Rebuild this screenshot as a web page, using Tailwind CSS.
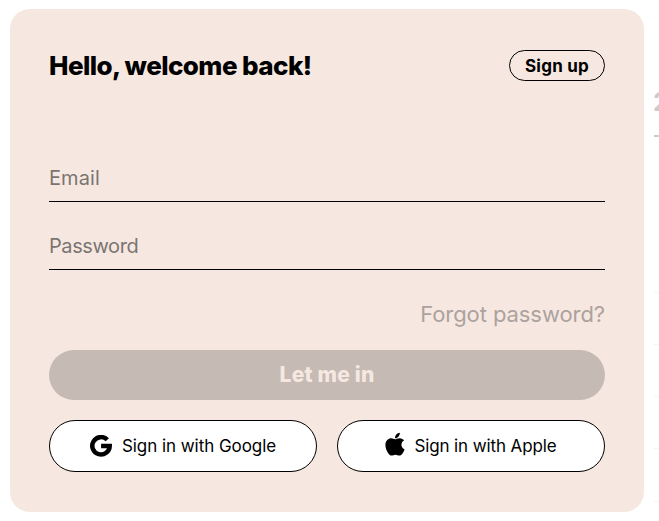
<!DOCTYPE html>
<html lang="en">
<head>
<meta charset="utf-8">
<title>Log in</title>
<script src="https://cdn.jsdelivr.net/npm/@tailwindcss/browser@4"></script>
</head>
<body class="flex h-[521px] w-[659px] gap-[10px] overflow-hidden bg-white pt-[9px] pl-[10px] font-['Inter','Liberation_Sans',sans-serif] text-black">
<main class="flex h-[503px] w-[634px] shrink-0 flex-col rounded-[20px] bg-[#f6e8e1] px-[39px] pt-[41px]">
  <header class="flex h-[31px] items-center justify-between">
    <h1 class="text-[26px] leading-[31px] font-extrabold tracking-[-0.58px] whitespace-nowrap">Hello, welcome back!</h1>
    <button class="flex h-[31px] w-24 items-center justify-center rounded-full border border-black text-[17px] leading-5 font-bold tracking-[0.25px] whitespace-nowrap">Sign up</button>
  </header>
  <form class="flex flex-col">
    <input type="email" placeholder="Email" class="mt-[73px] h-[48px] border-b border-black pt-px text-[20px] tracking-[0.1px] outline-none placeholder:text-[#7b7571]">
    <input type="password" placeholder="Password" class="mt-5 h-12 border-b border-black pt-px text-[20px] tracking-[-0.4px] outline-none placeholder:text-[#7b7571]">
    <a class="mt-[29px] self-end text-[22px] leading-[30px] tracking-[-0.07px] whitespace-nowrap text-[#aca29e]">Forgot password?</a>
    <button class="mt-[21px] h-[50px] rounded-full bg-[#c5bab4] text-[21px] font-extrabold tracking-[0.2px] text-[#f6e8e1]">Let me in</button>
    <div class="mt-5 grid grid-cols-2 gap-5">
      <button class="flex h-[52px] items-center justify-center rounded-full border border-black bg-white text-[17px] whitespace-nowrap">
        <svg class="mr-[10px] size-[22px] shrink-0" viewBox="0 0 22 22" fill="none" stroke="#000" stroke-width="4.5"><path d="M17.3 4.8A8.7 8.7 0 1 0 19.7 10.9H11.1"/></svg>
        <span class="pt-px tracking-[-0.05px]">Sign in with Google</span>
      </button>
      <button class="flex h-[52px] items-center justify-center rounded-full border border-black bg-white text-[17px] whitespace-nowrap">
        <svg class="mr-[9px] h-6 w-5 shrink-0 -translate-y-0.5" viewBox="0 0 384 470"><path d="M318.7 250.7c-.2-36.7 16.4-64.4 50-84.8-18.8-26.9-47.2-41.7-84.7-44.6-35.5-2.8-74.3 20.7-88.5 20.7-15 0-49.4-19.7-76.4-19.7C63.3 123.2 4 166.8 4 255.5q0 39.3 14.4 81.2c12.8 36.7 59 126.7 107.2 125.2 25.2-.6 43-17.9 75.8-17.9 31.8 0 48.3 17.9 76.4 17.9 48.6-.7 90.4-82.5 102.6-119.3-65.2-30.7-61.7-90-61.7-91.9zm-56.6-164.2c27.3-32.4 24.8-61.9 24-72.5-24.1 1.4-52 16.4-67.9 34.9-17.5 19.8-27.8 44.3-25.6 71.9 26.1 2 49.9-11.4 69.5-34.3z"/></svg>
        <span class="pt-px tracking-[-0.11px]">Sign in with Apple</span>
      </button>
    </div>
  </form>
</main>
<aside class="w-[5px] shrink-0 overflow-hidden pt-[76px]">
  <div class="-ml-px h-8 text-[26px] leading-[34px] font-bold text-[#cccccc]">2</div>
  <div class="mt-[18px] h-0.5 w-5 bg-[#cccccc]"></div>
  <div class="mt-[155px] h-px w-5 bg-[#f5f5f5]"></div>
  <div class="mt-[51px] h-px w-5 bg-[#f5f5f5]"></div>
  <div class="mt-[51px] h-px w-5 bg-[#f5f5f5]"></div>
  <div class="mt-[51px] h-px w-5 bg-[#f5f5f5]"></div>
  <div class="mt-[52px] h-px w-5 bg-[#f5f5f5]"></div>
</aside>
</body>
</html>
